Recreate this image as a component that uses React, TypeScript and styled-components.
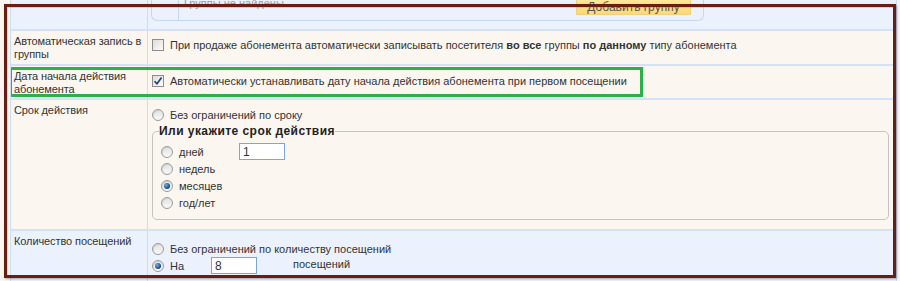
import React from 'react'
import styled, { createGlobalStyle, css } from 'styled-components'

const GlobalStyle = createGlobalStyle`
    html, body {
        margin: 0;
        padding: 0;
        background: #fbf7f0;
    }
    body {
        font-family: 'Liberation Sans', Arial, sans-serif;
        font-size: 11px;
        color: #333;
    }
`

const LINE = '#cbdcf3'

const Page = styled.div`
    position: relative;
    width: 900px;
    height: 281px;
    overflow: hidden;
    padding-left: 10px;
    box-sizing: border-box;
`

const Table = styled.div`
    width: 887px;
    border-left: 1px solid ${LINE};
    border-right: 1px solid ${LINE};
    box-sizing: border-box;
`

const Row = styled.div<{ $tone: 'blue' | 'cream'; $height: number }>`
    position: relative;
    display: grid;
    grid-template-columns: 137px 1fr;
    height: ${({ $height }) => $height}px;
    background: ${({ $tone }) => ($tone === 'blue' ? '#ebf2fd' : '#fbf7f0')};
    border-bottom: 2px solid #d3e2f6;
    overflow: hidden;
`

const Label = styled.div`
    padding: 4px 0 0 3px;
    line-height: 13px;
    letter-spacing: -0.1px;
    border-right: 1px solid ${LINE};
`

const Value = styled.div<{ $top?: number }>`
    padding: ${({ $top = 7 }) => $top}px 4px 0 4px;
    line-height: 14px;
`

const Highlight = styled.div`
    position: absolute;
    left: -2px;
    top: 1px;
    width: 634px;
    height: 30px;
    border: 3px solid #2bb04c;
    box-sizing: border-box;
    pointer-events: none;
`

const GroupsBox = styled.div`
    display: flex;
    width: 553px;
    height: 38px;
    margin: -17px 0 0 3px;
    border: 1px solid #c5d7ef;
    border-top: none;
    border-radius: 0 0 6px 6px;
    box-sizing: border-box;
`

const GroupsSide = styled.div`
    width: 26px;
    border-right: 1px solid #c5d7ef;
`

const GroupsMain = styled.div`
    flex: 1;
    display: flex;
    align-items: flex-start;
    padding: 0 12px 0 5px;
    color: #9a9a9a;
    line-height: 14px;
`

const GroupsEmpty = styled.span`
    margin-top: 13px;
`

const AddButton = styled.span`
    margin-left: auto;
    margin-top: 14px;
    width: 115px;
    height: 18px;
    line-height: 18px;
    text-align: center;
    background: linear-gradient(#feea9f, #fcd877);
    border: 1px solid #f3d07c;
    color: #555;
    font-size: 12px;
    box-sizing: border-box;
`

const Option = styled.label<{ $h?: number }>`
    display: flex;
    align-items: center;
    height: ${({ $h = 17 }) => $h}px;
    white-space: nowrap;
`

const controlBase = css`
    flex: none;
    display: inline-flex;
    align-items: center;
    justify-content: center;
    width: 12px;
    height: 12px;
    margin-right: 6px;
    box-sizing: border-box;
    border: 1px solid #9b9b9b;
    background: linear-gradient(#e2e2e2, #f8f8f8);
`

const Box = styled.span`
    ${controlBase};
    border-color: #8d8d8d;
    background: linear-gradient(135deg, #dcdcdc, #fbfbfb);
`

const Radio = styled.span<{ $on?: boolean }>`
    ${controlBase};
    border-radius: 50%;
    box-shadow: inset 1px 1px 1px rgba(0, 0, 0, 0.08);
    &::after {
        content: '';
        display: ${({ $on }) => ($on ? 'block' : 'none')};
        width: 6px;
        height: 6px;
        border-radius: 50%;
        background: radial-gradient(circle at 35% 35%, #6fb0e6, #14437a 70%);
    }
`

const Strong = styled.b`
    font-weight: bold;
`

const Fieldset = styled.fieldset`
    margin: 1px 0 0 0;
    width: 737px;
    height: 96px;
    padding: 5px 6px 0 8px;
    border: 1px solid #c3c3c3;
    border-radius: 5px;
    box-sizing: border-box;
`

const Legend = styled.legend`
    padding: 0;
    margin-left: -2px;
    font-size: 12px;
    letter-spacing: 0.45px;
    font-weight: bold;
    color: #222;
    line-height: 14px;
`

const Unit = styled.span<{ $w: number }>`
    display: inline-block;
    width: ${({ $w }) => $w}px;
`

const Field = styled.input`
    width: 46px;
    height: 17px;
    padding: 0 3px;
    box-sizing: border-box;
    border: 1px solid #7fa6d9;
    font-family: inherit;
    font-size: 12px;
    color: #333;
    background: #fff;
    outline: none;
`

const VisitsRow = styled.div`
    display: flex;
    align-items: center;
    height: 17px;
`

const VisitsUnit = styled.span`
    margin: -4px 0 0 36px;
`

const Frame = styled.div`
    position: absolute;
    left: 4px;
    top: 4px;
    width: 892px;
    height: 274px;
    border: 3px solid #6b1d12;
    box-sizing: border-box;
    box-shadow: 1px 1px 2px rgba(0, 0, 0, 0.35), inset 1px 1px 0 rgba(200, 120, 100, 0.35);
    pointer-events: none;
`

const Check = () => (
    <svg width="10" height="10" viewBox="0 0 10 10">
        <path d="M1.5 5.2 L4 7.8 L8.6 1.6" fill="none" stroke="#1d3f73" strokeWidth="1.6" />
    </svg>
)

const App = () => (
    <Page>
        <GlobalStyle />
        <Table>
            <Row $tone="blue" $height={29}>
                <Label />
                <div>
                    <GroupsBox>
                        <GroupsSide />
                        <GroupsMain>
                            <GroupsEmpty>Группы не найдены</GroupsEmpty>
                            <AddButton>Добавить группу</AddButton>
                        </GroupsMain>
                    </GroupsBox>
                </div>
            </Row>
            <Row $tone="cream" $height={33}>
                <Label>Автоматическая запись в группы</Label>
                <Value>
                    <Option $h={14}>
                        <Box />
                        <span>
                            При продаже абонемента автоматически записывать посетителя{' '}
                            <Strong>во все</Strong> группы <Strong>по данному</Strong> типу абонемента
                        </span>
                    </Option>
                </Value>
            </Row>
            <Row $tone="cream" $height={32}>
                <Highlight />
                <Label>Дата начала действия абонемента</Label>
                <Value $top={8}>
                    <Option $h={14}>
                        <Box>
                            <Check />
                        </Box>
                        <span>
                            Автоматически устанавливать дату начала действия абонемента при первом посещении
                        </span>
                    </Option>
                </Value>
            </Row>
            <Row $tone="cream" $height={129}>
                <Label>Срок действия</Label>
                <Value $top={7}>
                    <Option $h={16}>
                        <Radio />
                        Без ограничений по сроку
                    </Option>
                    <Fieldset>
                        <Legend>Или укажите срок действия</Legend>
                        <Option>
                            <Radio />
                            <Unit $w={60}>дней</Unit>
                            <Field defaultValue="1" />
                        </Option>
                        <Option>
                            <Radio />
                            недель
                        </Option>
                        <Option>
                            <Radio $on />
                            месяцев
                        </Option>
                        <Option>
                            <Radio />
                            год/лет
                        </Option>
                    </Fieldset>
                </Value>
            </Row>
            <Row $tone="blue" $height={60}>
                <Label>Количество посещений</Label>
                <Value $top={10}>
                    <Option $h={16}>
                        <Radio />
                        Без ограничений по количеству посещений
                    </Option>
                    <VisitsRow>
                        <Option>
                            <Radio $on />
                            <Unit $w={41}>На</Unit>
                        </Option>
                        <Field defaultValue="8" />
                        <VisitsUnit>посещений</VisitsUnit>
                    </VisitsRow>
                </Value>
            </Row>
        </Table>
        <Frame />
    </Page>
)

export default App
